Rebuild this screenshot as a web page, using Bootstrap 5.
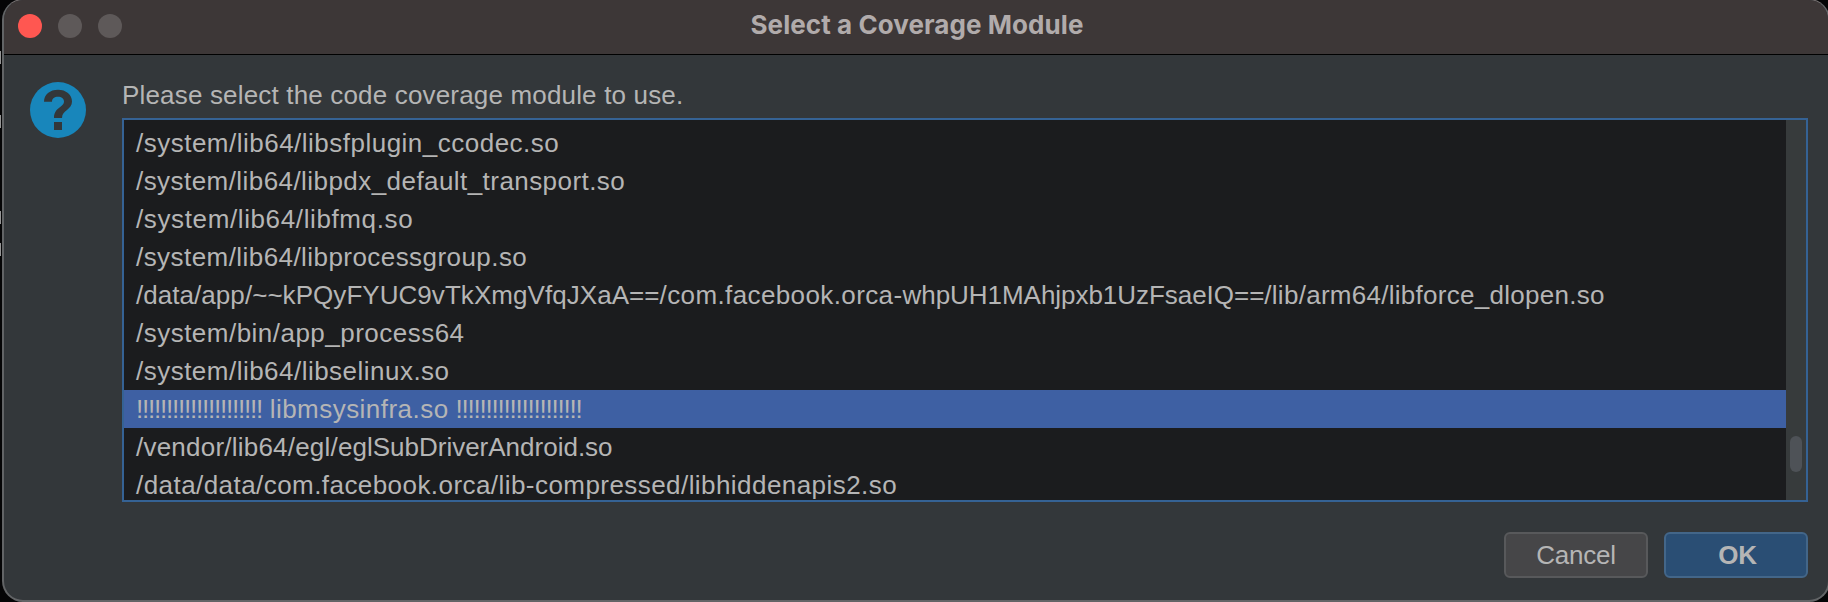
<!DOCTYPE html>
<html lang="en" data-bs-theme="dark">
<head>
<meta charset="utf-8">
<meta name="viewport" content="width=device-width, initial-scale=1">
<title>Select a Coverage Module</title>
<link href="https://cdn.jsdelivr.net/npm/bootstrap@5.3.0/dist/css/bootstrap.min.css" rel="stylesheet">
<style>
  body { background: #050506; font: 26px/38px "Liberation Sans", Arial, sans-serif; color: #b5b5b5; font-kerning: none; }
  .desktop { width: 1828px; height: 602px; }
  .speck { left: 0; width: 1px; height: 13px; background: #969696; }
  .dialog { width: 1828px; height: 603px; margin: -1px 0 0 2px; border: 2px solid #626466; border-top: 1px solid #716c6c; border-radius: 21px; background: #33373a; }
  .titlebar { height: 55px; background: #3d3737; border-bottom: 1px solid #000; padding-left: 14px; flex-shrink: 0; padding-top: 1px; }
  .light { width: 24px; height: 24px; border-radius: 50%; background: #5e5959; }
  .light-close { background: #ff5751; }
  .caption { font: 700 26px/38px Inter, "Liberation Sans", sans-serif; letter-spacing: .07px; color: #b1abab; left: 0; right: -2px; top: 6px; }
  .main { padding: 21px 20px 0 26px; }
  .help { margin: 6px 36px 0 0; flex-shrink: 0; }
  .prompt { letter-spacing: .17px; height: 42px; }
  .modules { height: 384px; border: 2px solid #356294; background: #1b1c1e; }
  .modules .list-group { padding-top: 4px; border-radius: 0; min-width: 0; }
  .modules .list-group-item { height: 38px; margin: 0; padding: 0 0 0 12px; border: 0; background: transparent; color: inherit; white-space: nowrap; border-radius: 0; flex-shrink: 0; letter-spacing: .48px; }
  .modules .list-group-item.active { background: #3e60a3; margin: 0; }
  .track { width: 20px; background: #373b3c; padding: 316px 4px 0; flex-shrink: 0; }
  .thumb { width: 12px; height: 36px; border-radius: 6px; background: #4e5257; }
  .t0 { letter-spacing: .05px; } .t1 { letter-spacing: .392px; } .t2 { letter-spacing: -.04px; }
  .t3 { letter-spacing: .28px; } .t4 { letter-spacing: .22px; } .bang { letter-spacing: -1.224px; }
  .actions { padding-top: 30px; gap: 16px; }
  .actions .btn { width: 144px; height: 46px; padding: 0; border: 2px solid #58595b; border-radius: 6px; background: #464648; color: #b5b5b5; font-size: 26px; line-height: 42px; letter-spacing: -.2px; }
  .actions .btn-primary { background: #2a4e74; border-color: #436689; font-weight: 700; padding-left: 3px; }
</style>
</head>
<body class="overflow-hidden">
<div class="desktop position-relative overflow-hidden">
  <i class="speck position-absolute" style="top:51px"></i>
  <i class="speck position-absolute" style="top:115px"></i>
  <i class="speck position-absolute" style="top:211px"></i>
  <i class="speck position-absolute" style="top:243px"></i>
  <div class="dialog overflow-hidden d-flex flex-column">
    <header class="titlebar position-relative d-flex align-items-start">
      <div class="d-flex" style="gap:16px;margin-top:13px">
        <span class="light light-close"></span><span class="light"></span><span class="light"></span>
      </div>
      <div class="caption position-absolute text-center">Select a Coverage Module</div>
    </header>
    <main class="main d-flex">
      <svg class="help" width="56" height="56" viewBox="0 0 56 56" aria-label="Question">
        <circle cx="28" cy="28" r="28" fill="#1886bb"/>
        <path d="M14 19.7C14 12.5 20 7.7 28 7.7S42 12.5 42 19.5C42 28 32 28 32 36H24C24 25 34 25.5 34 19.5C34 16.5 31.5 14.8 28 14.8S22 16.5 22 19.7ZM24 40h8v8h-8z" fill="#33373a"/>
      </svg>
      <div class="flex-grow-1">
        <div class="prompt">Please select the code coverage module to use.</div>
        <div class="modules d-flex overflow-hidden">
          <ul class="list-group list-group-flush flex-grow-1">
            <li class="list-group-item" style="letter-spacing:.49px">/system/lib64/libsfplugin_ccodec.so</li>
            <li class="list-group-item" style="letter-spacing:.44px">/system/lib64/libpdx_default_transport.so</li>
            <li class="list-group-item" style="letter-spacing:.62px">/system/lib64/libfmq.so</li>
            <li class="list-group-item" style="letter-spacing:.44px">/system/lib64/libprocessgroup.so</li>
            <li class="list-group-item"><span class="t0">/data/app/~~kPQyFYUC9vTkXmgVfqJXaA==</span><span class="t1">/com.facebook.orca-</span><span class="t2">whpUH1MAhjpxb1UzFsaeIQ==</span><span class="t3">/lib/arm64/libforce_dlopen.so</span></li>
            <li class="list-group-item">/system/bin/app_process64</li>
            <li class="list-group-item">/system/lib64/libselinux.so</li>
            <li class="list-group-item active"><span class="bang">!!!!!!!!!!!!!!!!!!!!!</span> <span style="letter-spacing:.46px">libmsysinfra.so</span><span style="letter-spacing:-.3px"> </span><span class="bang">!!!!!!!!!!!!!!!!!!!!!</span></li>
            <li class="list-group-item"><span class="t4">/vendor/lib64/egl/</span><span style="letter-spacing:0">eglSubDriverAndroid.so</span></li>
            <li class="list-group-item" style="letter-spacing:.44px">/data/data/com.facebook.orca/lib-compressed/libhiddenapis2.so</li>
          </ul>
          <div class="track"><div class="thumb"></div></div>
        </div>
        <div class="actions d-flex justify-content-end">
          <button class="btn btn-secondary" type="button">Cancel</button>
          <button class="btn btn-primary" type="button">OK</button>
        </div>
      </div>
    </main>
  </div>
</div>
<script src="https://cdn.jsdelivr.net/npm/bootstrap@5.3.0/dist/js/bootstrap.bundle.min.js"></script>
</body>
</html>
